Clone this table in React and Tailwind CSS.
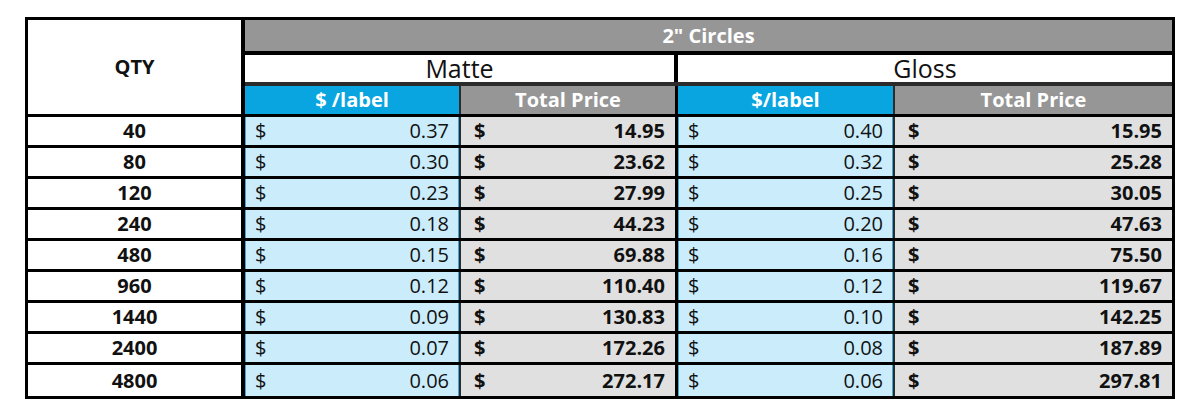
import React from "react";

const rows = [
  { qty: "40", mu: "0.37", mt: "14.95", gu: "0.40", gt: "15.95" },
  { qty: "80", mu: "0.30", mt: "23.62", gu: "0.32", gt: "25.28" },
  { qty: "120", mu: "0.23", mt: "27.99", gu: "0.25", gt: "30.05" },
  { qty: "240", mu: "0.18", mt: "44.23", gu: "0.20", gt: "47.63" },
  { qty: "480", mu: "0.15", mt: "69.88", gu: "0.16", gt: "75.50" },
  { qty: "960", mu: "0.12", mt: "110.40", gu: "0.12", gt: "119.67" },
  { qty: "1440", mu: "0.09", mt: "130.83", gu: "0.10", gt: "142.25" },
  { qty: "2400", mu: "0.07", mt: "172.26", gu: "0.08", gt: "187.89" },
  { qty: "4800", mu: "0.06", mt: "272.17", gu: "0.06", gt: "297.81" },
];

const blueCell =
  "flex items-center justify-between bg-[#cbedfb] pl-[10px] pr-[10px] shadow-[inset_1px_0_0_#3aa9de,inset_-1px_0_0_#3aa9de] text-[#111]";
const grayCell =
  "flex items-center justify-between bg-[#e0e0e0] pl-[13px] pr-[10px] font-bold text-[#111]";

const App = () => {
  return (
    <div
      className="min-h-screen bg-white pt-[17px] pl-[25px]"
      style={{ fontFamily: '"Open Sans", "Liberation Sans", sans-serif' }}
    >
      <div className="w-[1150px] border-[3px] border-black text-[20px] leading-none">
        {/* Header */}
        <div className="flex border-b-[3px] border-black h-[97px]">
          <div className="w-[217px] border-r-4 border-black flex items-center justify-center font-bold text-[#111]">
            QTY
          </div>
          <div className="flex-1 flex flex-col">
            <div className="h-[35px] border-b-4 border-black bg-[#969696] flex items-center justify-center font-bold text-white">
              2" Circles
            </div>
            <div className="h-[31px] border-b-4 border-[#2b2b2b] flex text-[25px] text-[#111]">
              <div className="w-[433px] border-r-4 border-black flex items-center justify-center">
                Matte
              </div>
              <div className="flex-1 flex items-center justify-center">Gloss</div>
            </div>
            <div className="flex-1 flex font-bold text-white">
              <div className="w-[216px] border-r-2 border-[#2b2b2b] bg-[#08a5e0] flex items-center justify-center">
                $ /label
              </div>
              <div className="w-[217px] border-r-[3px] border-black bg-[#969696] flex items-center justify-center">
                Total Price
              </div>
              <div className="w-[217px] border-r-2 border-[#2b2b2b] bg-[#08a5e0] flex items-center justify-center">
                $/label
              </div>
              <div className="flex-1 bg-[#969696] flex items-center justify-center">
                Total Price
              </div>
            </div>
          </div>
        </div>

        {/* Data rows */}
        {rows.map((r, i) => (
          <div
            key={r.qty}
            className={
              "flex h-[31px] " +
              (i < rows.length - 1 ? "border-b-[3px] border-black" : "")
            }
          >
            <div className="w-[217px] border-r-4 border-black flex items-center justify-center font-bold text-[#111]">
              {r.qty}
            </div>
            <div className={"w-[216px] border-r-2 border-[#2b2b2b] " + blueCell}>
              <span>$</span>
              <span>{r.mu}</span>
            </div>
            <div className={"w-[217px] border-r-[3px] border-black " + grayCell}>
              <span>$</span>
              <span>{r.mt}</span>
            </div>
            <div className={"w-[217px] border-r-2 border-[#2b2b2b] " + blueCell}>
              <span>$</span>
              <span>{r.gu}</span>
            </div>
            <div className={"flex-1 " + grayCell}>
              <span>$</span>
              <span>{r.gt}</span>
            </div>
          </div>
        ))}
      </div>
    </div>
  );
};

export default App;
